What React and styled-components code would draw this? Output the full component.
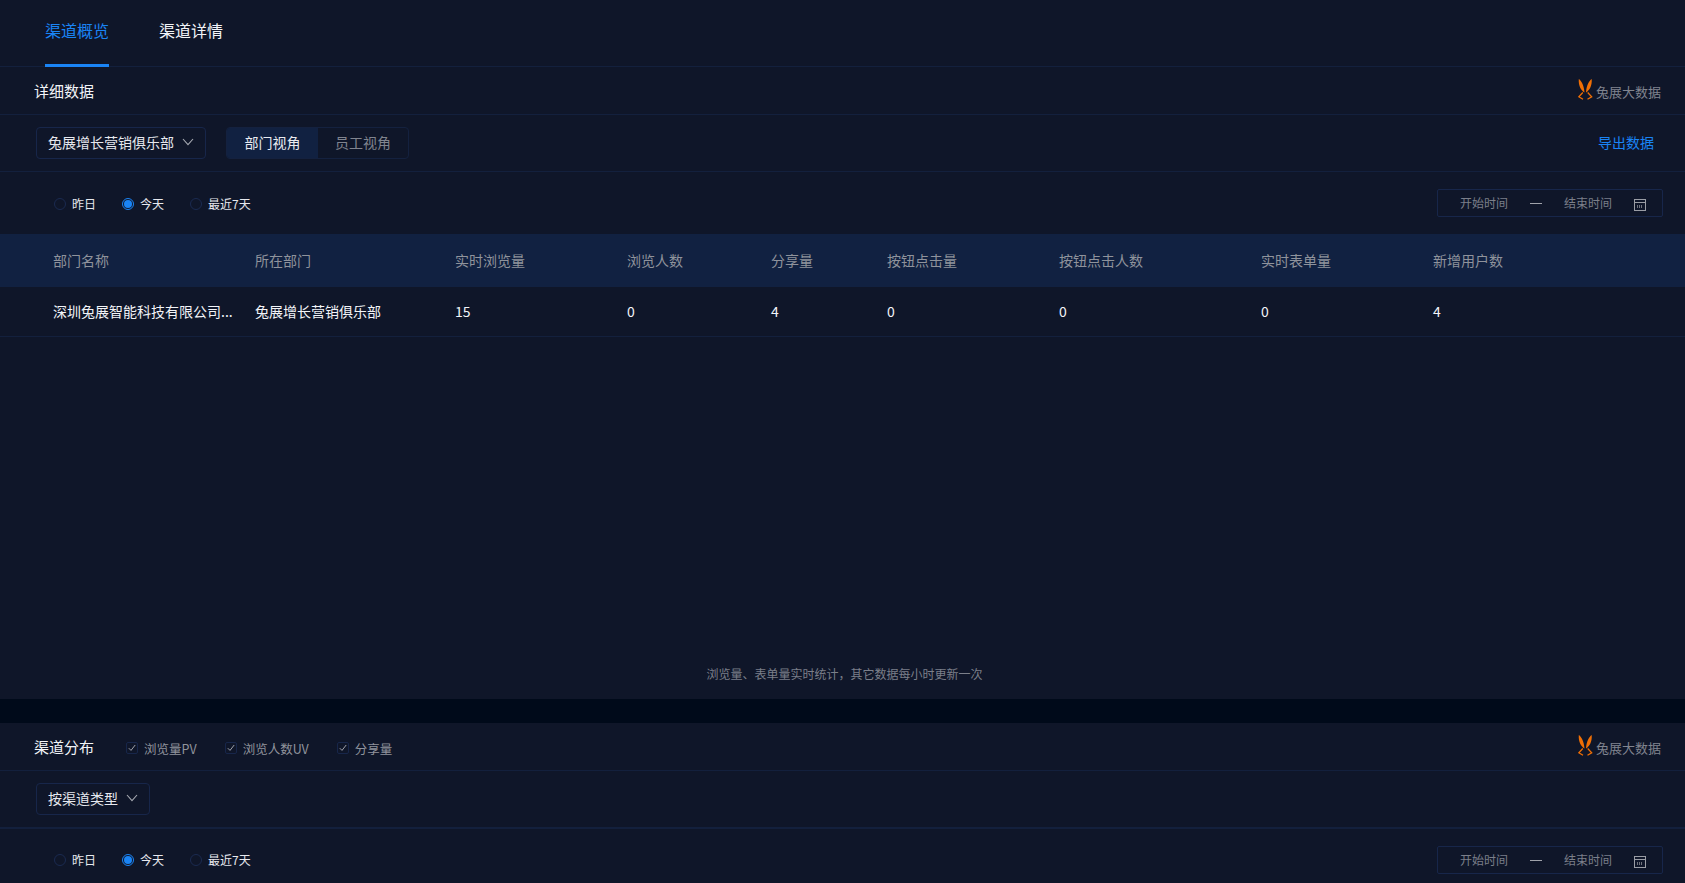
import React from 'react'
import styled, { createGlobalStyle } from 'styled-components'

const GlobalStyle = createGlobalStyle`
  html, body {
    margin: 0;
    padding: 0;
    height: 883px;
    overflow: hidden;
    background: #0f1629;
    font-family: "Noto Sans CJK SC", "Liberation Sans", sans-serif;
  }
  * { box-sizing: border-box; }
`

const Page = styled.div`
  width: 1685px;
  display: flex;
  flex-direction: column;
`
const Tabs = styled.div`
  height: 67px;
  display: flex;
  gap: 50px;
  padding-left: 45px;
  border-bottom: 1px solid #13203d;
`
const Tab = styled.div`
  height: 67px;
  line-height: 61px;
  font-size: 16px;
  color: ${p => (p.$active ? '#1a84f5' : '#f2f4f8')};
  border-bottom: 3px solid ${p => (p.$active ? '#1a84f5' : 'transparent')};
`
const Section = styled.section`
  height: ${p => p.$height};
  display: flex;
  flex-direction: column;
`
const Head = styled.div`
  height: 48px;
  flex: none;
  display: flex;
  align-items: center;
  padding: 0 24px 0 34px;
  border-bottom: 1px solid #13203d;
`
const HeadTitle = styled.div`
  font-size: 15px;
  color: #f2f4f8;
  margin-right: 32px;
`
const Spacer = styled.div`
  flex: 1;
`
const Logo = styled.div`
  display: flex;
  align-items: flex-end;
  gap: 3px;
  font-size: 13px;
  color: #80848f;
  line-height: 17px;
  margin-top: -2px;
`
const CheckItem = styled.label`
  display: flex;
  align-items: center;
  gap: 6px;
  margin-right: 28px;
  font-size: 12.5px;
  color: #8f939c;
  padding-top: 3px;
`
const CheckBox = styled.span`
  width: 12px;
  height: 12px;
  display: flex;
  align-items: center;
  justify-content: center;
  border: 1px solid #17264a;
  border-radius: 2px;
`
const ToolRow = styled.div`
  height: ${p => p.$height};
  flex: none;
  display: flex;
  align-items: center;
  padding: 0 31px 0 36px;
  border-bottom: ${p => (p.$thick ? 2 : 1)}px solid #13203d;
`
const Select = styled.div`
  height: 32px;
  display: flex;
  align-items: center;
  gap: 8px;
  padding: 0 11px 3px;
  font-size: 14px;
  color: #e6e8ee;
  border: 1px solid #17264a;
  border-radius: 4px;
`
const Segment = styled.div`
  height: 32px;
  margin-left: 20px;
  display: flex;
  border: 1px solid #14213f;
  border-radius: 4px;
  overflow: hidden;
`
const SegmentItem = styled.div`
  width: ${p => p.$width}px;
  display: flex;
  align-items: center;
  justify-content: center;
  padding-bottom: 3px;
  font-size: 14px;
  color: ${p => (p.$active ? '#e9ebf0' : '#80848f')};
  background: ${p => (p.$active ? '#112141' : 'transparent')};
`
const ExportLink = styled.a`
  font-size: 14px;
  color: #1a84f5;
  margin-top: -2px;
`
const RadioRow = styled.div`
  height: 62px;
  flex: none;
  display: flex;
  align-items: center;
  padding: 0 22px 0 54px;
`
const RadioItem = styled.label`
  display: flex;
  align-items: center;
  gap: 6px;
  margin: 0 26px ${p => (p.$high ? '2px' : '0')} 0;
  font-size: 12px;
  color: #e6e8ee;
`
const RadioDot = styled.span`
  width: 12px;
  height: 12px;
  margin-top: 2px;
  border-radius: 50%;
  border: 1px solid ${p => (p.$checked ? '#1a84f5' : '#1a2a50')};
  display: flex;
  align-items: center;
  justify-content: center;
  &::after {
    content: '';
    display: ${p => (p.$checked ? 'block' : 'none')};
    width: 8px;
    height: 8px;
    border-radius: 50%;
    background: #1a84f5;
  }
`
const DateBox = styled.div`
  width: 226px;
  height: 28px;
  display: flex;
  align-items: center;
  padding: 0 0 2px 22px;
  font-size: 12px;
  color: #7b7f8a;
  border: 1px solid #17264a;
  border-radius: 2px;
`
const DateDash = styled.span`
  width: 12px;
  height: 1px;
  margin: 2px 22px 0;
  background: #a0a3ab;
`
const DateIcon = styled.svg`
  margin-left: 22px;
  margin-top: 5px;
`
const Row = styled.div`
  height: ${p => p.$height}px;
  flex: none;
  display: grid;
  grid-template-columns: 202px 200px 172px 144px 116px 172px 202px 172px 1fr;
  align-items: center;
  padding: 0 0 1px 53px;
  font-size: 14px;
  color: ${p => p.$color};
  background: ${p => p.$bg || 'transparent'};
  border-bottom: ${p => (p.$line ? '1px solid #13203d' : 'none')};
`
const Cell = styled.div`
  white-space: nowrap;
`
const TableArea = styled.div`
  flex: 1;
`
const Note = styled.div`
  height: 33px;
  flex: none;
  padding-left: 4px;
  text-align: center;
  font-size: 12px;
  line-height: 16px;
  color: #7b7f8a;
`
const Gap = styled.div`
  height: 24px;
  flex: none;
  background: #000a1a;
`

const Chevron = () => (
  <svg width="12" height="8" viewBox="0 0 12 8" fill="none" stroke="#a6a9b1" strokeWidth="1.1">
    <path d="M1 1l5 5.6L11 1" />
  </svg>
)

const Tick = () => (
  <svg width="8" height="8" viewBox="0 0 8 8" fill="none" stroke="#a0a3ab" strokeWidth="1">
    <path d="M.8 4.2L3 6.4 7.2 1" />
  </svg>
)

const Rabbit = () => (
  <svg width="15" height="21" viewBox="0 0 15 21">
    <path fill="#f06f05" d="M.8 0c2.800 2 5 6 5.700 13.500C3.300 11.500.2 7 .8 0zM13.700 0c.6 7-2.500 11.500-5.700 13.500C8.700 6 10.900 2 13.700 0z" />
    <path fill="none" stroke="#f06f05" strokeWidth="1.300" d="M4.800 13.500L.8 17.800 5 20.300M9.700 13.500l4 4.300-4.200 2.500" />
  </svg>
)

const CalendarIcon = () => (
  <DateIcon width="12" height="12" viewBox="0 0 12 12">
    <rect x="0.5" y="0.5" width="11" height="11" fill="none" stroke="#9a9da5" />
    <path d="M1 3.500h10" stroke="#9a9da5" />
    <path d="M3.500 6v3M5.500 6v3M7.500 6v3" stroke="#70737d" />
  </DateIcon>
)

const RangeRow = ({ high }) => (
  <RadioRow>
    <RadioItem $high={high}><RadioDot />昨日</RadioItem>
    <RadioItem $high={high}><RadioDot $checked />今天</RadioItem>
    <RadioItem $high={high}><RadioDot />最近7天</RadioItem>
    <Spacer />
    <DateBox>
      开始时间
      <DateDash />
      结束时间
      <CalendarIcon />
    </DateBox>
  </RadioRow>
)

const BrandLogo = () => (
  <Logo>
    <Rabbit />
    兔展大数据
  </Logo>
)

const columns = ['部门名称', '所在部门', '实时浏览量', '浏览人数', '分享量', '按钮点击量', '按钮点击人数', '实时表单量', '新增用户数']
const values = ['深圳兔展智能科技有限公司...', '兔展增长营销俱乐部', '15', '0', '4', '0', '0', '0', '4']

export default function App() {
  return (
    <Page>
      <GlobalStyle />
      <Tabs>
        <Tab $active>渠道概览</Tab>
        <Tab>渠道详情</Tab>
      </Tabs>

      <Section $height="632px">
        <Head>
          <HeadTitle>详细数据</HeadTitle>
          <Spacer />
          <BrandLogo />
        </Head>
        <ToolRow $height="57px">
          <Select>兔展增长营销俱乐部<Chevron /></Select>
          <Segment>
            <SegmentItem $active $width={91}>部门视角</SegmentItem>
            <SegmentItem $width={90}>员工视角</SegmentItem>
          </Segment>
          <Spacer />
          <ExportLink>导出数据</ExportLink>
        </ToolRow>
        <RangeRow />
        <Row $height={53} $bg="#112141" $color="#8f939c">
          {columns.map(c => <Cell key={c}>{c}</Cell>)}
        </Row>
        <Row $height={50} $line $color="#f2f4f8">
          {values.map((v, i) => <Cell key={i}>{v}</Cell>)}
        </Row>
        <TableArea />
        <Note>浏览量、表单量实时统计，其它数据每小时更新一次</Note>
      </Section>
      <Gap />
      <Section $height="160px">
        <Head>
          <HeadTitle>渠道分布</HeadTitle>
          <CheckItem><CheckBox><Tick /></CheckBox>浏览量PV</CheckItem>
          <CheckItem><CheckBox><Tick /></CheckBox>浏览人数UV</CheckItem>
          <CheckItem><CheckBox><Tick /></CheckBox>分享量</CheckItem>
          <Spacer />
          <BrandLogo />
        </Head>
        <ToolRow $height="58px" $thick>
          <Select>按渠道类型<Chevron /></Select>
        </ToolRow>
        <RangeRow high />
      </Section>
    </Page>
  )
}
